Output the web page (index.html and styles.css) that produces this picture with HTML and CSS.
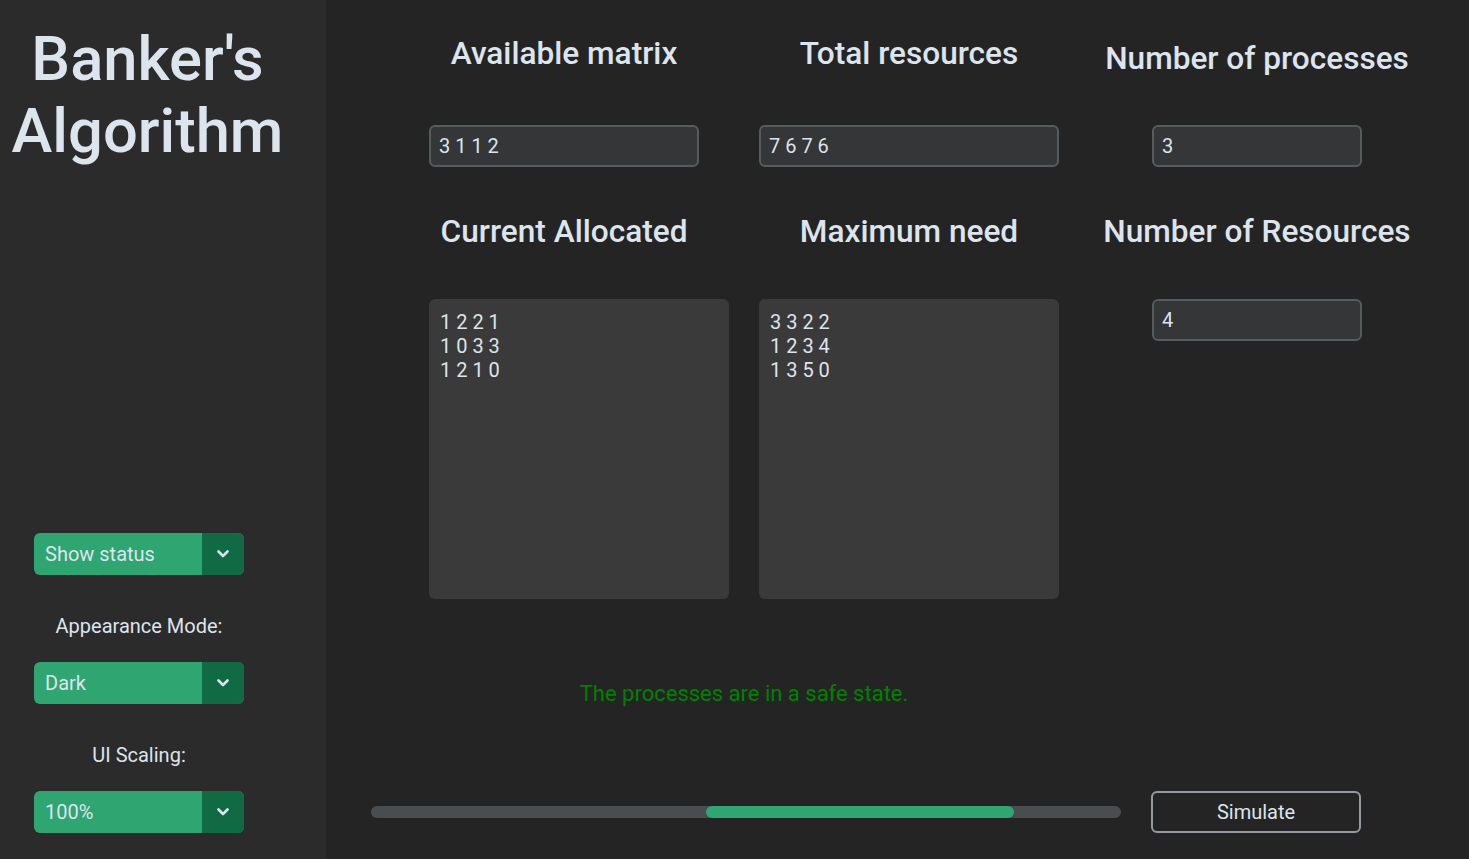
FILE: index.html
```html
<!DOCTYPE html>
<html>
<head>
<meta charset="utf-8">
<link rel="stylesheet" href="styles.css">
<title>Banker's Algorithm</title>
</head>
<body>
<div class="app">
  <aside class="sidebar">
    <h1 class="title">Banker's<br>Algorithm</h1>
    <div class="controls">
      <div class="dropdown">
        <span class="dd-text">Show status</span>
        <span class="dd-arrow"><svg width="12" height="8" viewBox="0 0 12 8"><polyline points="1.5,1.5 6,6 10.5,1.5" fill="none" stroke="#dce4ee" stroke-width="2.6" stroke-linecap="round" stroke-linejoin="round"/></svg></span>
      </div>
      <div class="side-label">Appearance Mode:</div>
      <div class="dropdown">
        <span class="dd-text">Dark</span>
        <span class="dd-arrow"><svg width="12" height="8" viewBox="0 0 12 8"><polyline points="1.5,1.5 6,6 10.5,1.5" fill="none" stroke="#dce4ee" stroke-width="2.6" stroke-linecap="round" stroke-linejoin="round"/></svg></span>
      </div>
      <div class="side-label">UI Scaling:</div>
      <div class="dropdown">
        <span class="dd-text">100%</span>
        <span class="dd-arrow"><svg width="12" height="8" viewBox="0 0 12 8"><polyline points="1.5,1.5 6,6 10.5,1.5" fill="none" stroke="#dce4ee" stroke-width="2.6" stroke-linecap="round" stroke-linejoin="round"/></svg></span>
      </div>
    </div>
  </aside>
  <main class="main">
    <div class="grid">
      <h2 class="heading h-c1 r1">Available matrix</h2>
      <h2 class="heading h-c2 r1">Total resources</h2>
      <h2 class="heading h-c3 r1 shift">Number of processes</h2>

      <div class="entry e-c1 r2">3 1 1 2</div>
      <div class="entry e-c2 r2">7 6 7 6</div>
      <div class="entry e-c3 r2">3</div>

      <h2 class="heading h-c1 r3 tall">Current Allocated</h2>
      <h2 class="heading h-c2 r3 tall">Maximum need</h2>
      <h2 class="heading h-c3 r3 tall">Number of Resources</h2>

      <div class="textbox t-c1 r4">1 2 2 1<br>1 0 3 3<br>1 2 1 0</div>
      <div class="textbox t-c2 r4">3 3 2 2<br>1 2 3 4<br>1 3 5 0</div>
      <div class="entry e-c3 r4 top">4</div>

      <div class="status">The processes are in a safe state.</div>
    </div>
    <div class="bottom">
      <div class="progress"><div class="progress-fill" style="left:335px;width:308px"></div></div>
      <div class="button">Simulate</div>
    </div>
  </main>
</div>
</body>
</html>
```

FILE: styles.css
```css
* { box-sizing: border-box; }
html, body {
  margin: 0;
  padding: 0;
  background: #242424;
  font-family: Roboto, "Liberation Sans", sans-serif;
  color: #dce4ee;
}
.app {
  display: flex;
  width: 1469px;
  height: 859px;
}
.sidebar {
  width: 326px;
  flex: none;
  background: #2b2b2b;
  display: flex;
  flex-direction: column;
  padding-bottom: 26px;
}
.title {
  margin: 23px 0 0 0;
  width: 295px;
  text-align: center;
  font-size: 61.5px;
  line-height: 72px;
  font-weight: 500;
}
.controls {
  margin-top: auto;
  margin-left: 34px;
  width: 210px;
  display: flex;
  flex-direction: column;
}
.dropdown {
  height: 42px;
  border-radius: 6px;
  overflow: hidden;
  display: flex;
  background: #2fa572;
}
.dd-text {
  flex: 1;
  padding-left: 11px;
  font-size: 20px;
  line-height: 42px;
}
.dd-arrow {
  width: 42px;
  background: #106a43;
  display: flex;
  align-items: center;
  justify-content: center;
}
.side-label {
  text-align: center;
  font-size: 20px;
  line-height: 24px;
  margin: 39px 0 24px;
}
.main {
  flex: 1;
  display: flex;
  flex-direction: column;
}
.grid {
  display: grid;
  margin-left: 103px;
  grid-template-columns: 300px 300px 336px;
  grid-template-rows: 108px 59px 132px 300px auto;
  column-gap: 30px;
}
.heading {
  margin: 0;
  font-size: 31.6px;
  font-weight: 500;
  line-height: 108px;
  text-align: center;
  white-space: nowrap;
}
.heading.tall { line-height: 130px; }
.heading.shift { padding-top: 5px; }
.h-c1 { grid-column: 1; width: 270px; justify-self: start; }
.h-c2 { grid-column: 2; }
.h-c3 { grid-column: 3; }
.r1 { grid-row: 1; }
.r2 { grid-row: 2; }
.r3 { grid-row: 3; }
.r4 { grid-row: 4; }
.entry {
  height: 42px;
  align-self: end;
  background: #343638;
  border: 2px solid #565b5e;
  border-radius: 6px;
  padding-left: 8px;
  font-size: 20px;
  line-height: 38px;
}
.entry.top { align-self: start; }
.e-c1 { grid-column: 1; width: 270px; }
.e-c2 { grid-column: 2; width: 300px; }
.e-c3 { grid-column: 3; width: 210px; justify-self: center; }
.textbox {
  background: #3a3a3a;
  border-radius: 6px;
  padding: 11px 11px;
  font-size: 20px;
  line-height: 24px;
}
.t-c1 { grid-column: 1; }
.t-c2 { grid-column: 2; }
.status {
  grid-column: 1 / 3;
  grid-row: 5;
  margin-top: 82px;
  text-align: center;
  font-size: 22px;
  line-height: 26px;
  color: #008000;
}
.bottom {
  display: flex;
  align-items: center;
  margin: 84px 0 0 45px;
  gap: 30px;
}
.progress {
  position: relative;
  width: 750px;
  height: 12px;
  border-radius: 6px;
  background: #4a4d50;
  overflow: hidden;
}
.progress-fill {
  position: absolute;
  top: 0;
  bottom: 0;
  border-radius: 6px;
  background: #2fa572;
}
.button {
  width: 210px;
  height: 42px;
  border: 2px solid #949a9f;
  border-radius: 6px;
  text-align: center;
  font-size: 20px;
  line-height: 38px;
}
```
